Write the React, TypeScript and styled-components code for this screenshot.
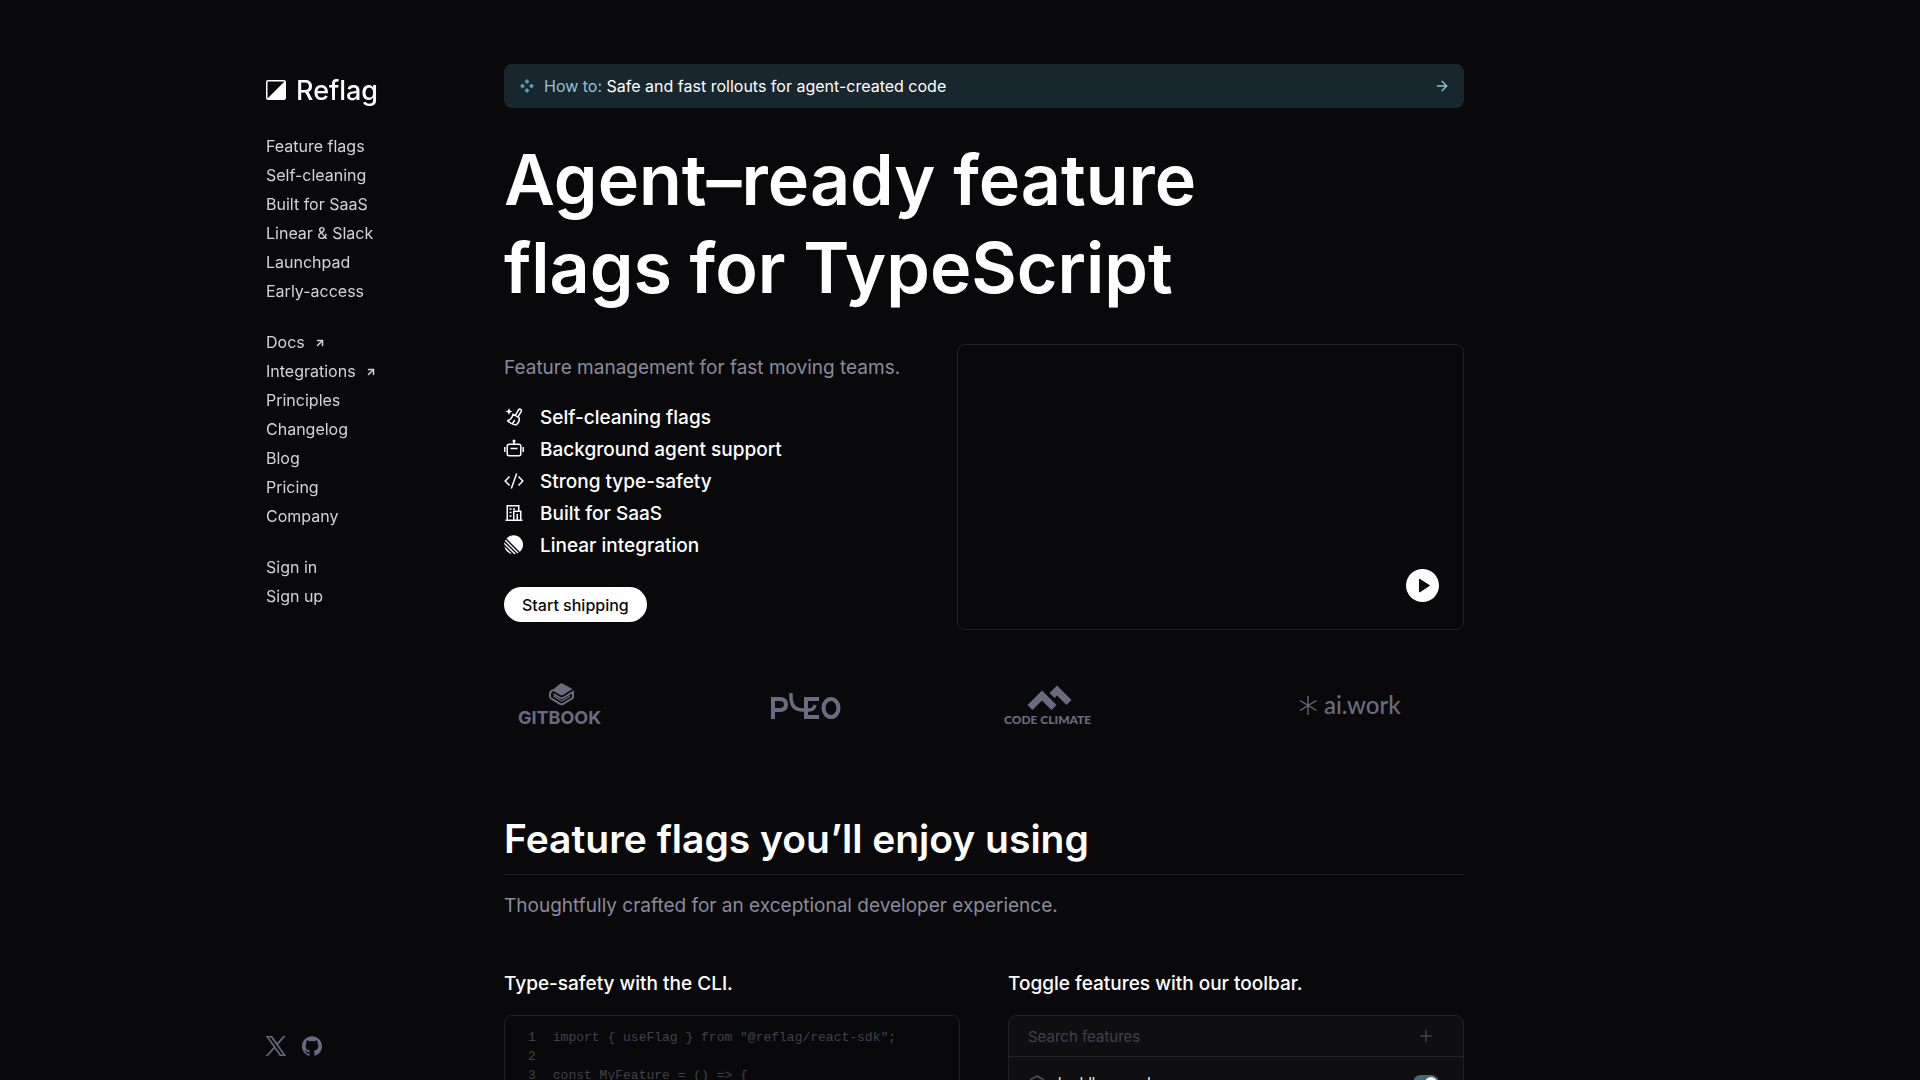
import React from "react";
import styled, { createGlobalStyle } from "styled-components";
import { ArrowRight, ArrowUpRight, Plus } from "lucide-react";

const sans = `Inter, "Liberation Sans", sans-serif`;
const mono = `"Liberation Mono", monospace`;

const GlobalStyle = createGlobalStyle`
  *, *::before, *::after { box-sizing: border-box; }
  body { margin: 0; background: #09090b; color: #fff; font-family: ${sans}; }
  a { color: inherit; text-decoration: none; }
  ul { list-style: none; margin: 0; padding: 0; }
  h1, h2, h3, p { margin: 0; }
  svg { display: block; flex: none; }
`;

const Page = styled.div`
  height: 100vh;
  overflow-y: auto;
  scrollbar-width: none;
`;

const Container = styled.div`
  display: grid;
  grid-template-columns: 238px minmax(0, 960px);
  max-width: 1388px;
  margin: 0 auto;
`;

const Sidebar = styled.aside`
  position: sticky;
  top: 0;
  height: 100vh;
  display: flex;
  flex-direction: column;
  padding: 76px 0 24px;
`;

const Brand = styled.a`
  display: flex;
  align-items: center;
  gap: 10px;
  height: 28px;
  font-size: 27px;
  font-weight: 500;
`;

const Nav = styled.nav`
  display: flex;
  flex-direction: column;
  gap: 22px;
  margin-top: 28px;
`;

const NavGroup = styled.ul`
  font-size: 16px;
  line-height: 29px;
  color: #d4d4d8;
`;

const NavLink = styled.a`
  display: inline-flex;
  align-items: center;
  gap: 9px;
  height: 29px;
  vertical-align: top;
`;

const Socials = styled.div`
  display: flex;
  gap: 16px;
  margin-top: auto;
  color: #6b6b80;
`;

const Main = styled.main`
  padding-top: 64px;
`;

const Banner = styled.a`
  display: flex;
  align-items: center;
  height: 44px;
  padding: 0 14px 0 16px;
  border-radius: 8px;
  background: #18262d;
  color: #8fc3d3;
  font-size: 16px;
`;

const BannerText = styled.span`
  flex: 1;
  margin-left: 10px;
  b { font-weight: 400; color: #fff; }
`;

const Title = styled.h1`
  margin-top: 28px;
  font-size: 70px;
  line-height: 88px;
  font-weight: 600;
`;

const Hero = styled.section`
  display: grid;
  grid-template-columns: 453px minmax(0, 1fr);
  margin-top: 32px;
`;

const Lead = styled.p`
  font-size: 19px;
  line-height: 32px;
  color: #8a8a9e;
`;

const HeroText = styled.div`
  padding-top: 8px;
`;

const Features = styled.ul`
  margin-top: 17px;
  font-size: 19px;
  font-weight: 500;
`;

const Feature = styled.li`
  display: flex;
  align-items: center;
  gap: 16px;
  height: 32px;
`;

const PrimaryButton = styled.button`
  height: 35px;
  margin-top: 26px;
  padding: 0 18px;
  border: 0;
  border-radius: 18px;
  background: #fff;
  color: #09090b;
  font: 500 16px ${sans};
`;

const Video = styled.div`
  display: flex;
  align-items: flex-end;
  justify-content: flex-end;
  height: 286px;
  padding: 27px 24px;
  border: 1px solid #222226;
  border-radius: 8px;
`;

const PlayButton = styled.button`
  width: 33px;
  height: 33px;
  padding: 0;
  border: 0;
  border-radius: 50%;
  background: #fff;
  color: #09090b;
`;

const Logos = styled.section`
  display: grid;
  grid-template-columns: repeat(4, 1fr);
  align-items: center;
  height: 48px;
  margin-top: 52px;
  color: #6b6b80;
`;

const LogoItem = styled.div<{ $start: number }>`
  padding-left: ${(p) => p.$start}px;
`;

const SectionTitle = styled.h2`
  margin-top: 82px;
  padding-bottom: 8px;
  border-bottom: 1px solid #222226;
  font-size: 39px;
  line-height: 54px;
  font-weight: 600;
`;

const SectionLead = styled(Lead)`
  margin-top: 15px;
`;

const Cards = styled.section`
  display: grid;
  grid-template-columns: 1fr 1fr;
  gap: 48px;
  margin-top: 46px;
`;

const CardTitle = styled.h3`
  margin-bottom: 15px;
  font-size: 19px;
  line-height: 32px;
  font-weight: 500;
`;

const Card = styled.div<{ $raised?: boolean }>`
  height: 320px;
  border: 1px solid #222226;
  border-radius: 8px;
  background: ${(p) => (p.$raised ? "#0f0f11" : "transparent")};
`;

const Code = styled.pre`
  margin: 0;
  padding: 12px 23px;
  font: 13px/19px ${mono};
  color: #41414b;
`;

const CodeLine = styled.div`
  display: flex;
  gap: 17px;
  height: 19px;
`;

const SearchBar = styled.div`
  display: flex;
  align-items: center;
  height: 41px;
  padding: 0 28px 0 19px;
  border-bottom: 1px solid #222226;
`;

const SearchInput = styled.input`
  flex: 1;
  padding: 0;
  border: 0;
  outline: 0;
  background: transparent;
  color: #fff;
  font: 15px ${sans};
  &::placeholder { color: #41414b; opacity: 1; }
`;

const IconButton = styled.button`
  padding: 0;
  border: 0;
  background: none;
  color: #41414b;
`;

const FlagRow = styled.label`
  display: flex;
  align-items: center;
  gap: 13px;
  padding: 14px 24px 0 20px;
  font-size: 14px;
  line-height: 24px;
`;

const FlagName = styled.span`
  flex: 1;
`;

const Switch = styled.input`
  appearance: none;
  display: flex;
  width: 26px;
  height: 16px;
  margin: 0;
  padding: 2px;
  border-radius: 8px;
  background: #3f6b7c;
  &:checked { justify-content: flex-end; }
  &::before { content: ""; width: 12px; height: 12px; border-radius: 50%; background: #fff; }
`;

const CODE = [
  `import { useFlag } from "@reflag/react-sdk";`,
  ``,
  `const MyFeature = () => {`,
  `  const { isEnabled } = useFlag("huddle");`,
];

const NAV: { label: string; out?: boolean }[][] = [
  ["Feature flags", "Self-cleaning", "Built for SaaS", "Linear & Slack", "Launchpad", "Early-access"].map((label) => ({ label })),
  [
    { label: "Docs", out: true },
    { label: "Integrations", out: true },
    { label: "Principles" },
    { label: "Changelog" },
    { label: "Blog" },
    { label: "Pricing" },
    { label: "Company" },
  ],
  [{ label: "Sign in" }, { label: "Sign up" }],
];

const BrandMark = () => (
  <svg width="20" height="20" viewBox="0 0 20 20">
    <rect x="0.75" y="0.75" width="18.5" height="18.5" rx="1.5" fill="none" stroke="#fff" strokeWidth="1.5" />
    <path d="M19 1V19H1Z" fill="#fff" />
  </svg>
);

const Sparkle = () => (
  <svg width="14" height="14" viewBox="0 0 14 14" fill="#5b9bb0">
    <path d="M7 0 9.5 2.5 7 5 4.500 2.500ZM7 9 9.500 11.500 7 14 4.500 11.500ZM2.500 4.500 5 7 2.500 9.500 0 7ZM11.500 4.500 14 7 11.500 9.500 9 7Z" />
  </svg>
);

const Broom = () => (
  <svg width="20" height="20" viewBox="0 0 20 20" fill="none" stroke="#fff" strokeWidth="1.5" strokeLinejoin="round" strokeLinecap="round">
    <path d="M11.600 8 14.600 2.700Q15.400 1.600 16.700 2.300 18 3.100 17.300 4.300L14.200 9.600" />
    <path d="M9 7.200 15 10.700C15.800 13.500 14 16.500 12 18 8.500 17.500 5.500 16 3.700 13.500 6.500 13 8.200 11 9 7.200Z" />
    <path d="M8.500 16.500 10.500 13.500" />
    <path d="M5 1 6 3.500 8.500 4.500 6 5.500 5 8 4 5.500 1.500 4.500 4 3.500Z" fill="#fff" stroke="none" />
  </svg>
);

const Robot = () => (
  <svg width="20" height="20" viewBox="0 0 20 20" fill="none" stroke="#fff" strokeWidth="1.500">
    <rect x="3.200" y="5.200" width="13.600" height="11.600" rx="2" />
    <path d="M10 5V1.500M6.500 9.500H13.500M0.750 8V13M19.250 8V13" />
    <circle cx="10" cy="2" r="0.800" fill="#fff" />
  </svg>
);

const CodeIcon = () => (
  <svg width="20" height="20" viewBox="0 0 20 20" fill="none" stroke="#fff" strokeWidth="1.500">
    <path d="M5.500 5.500 1.200 10 5.500 14.500M14.500 5.500 18.800 10 14.500 14.500M12.700 2.500 7.300 17.500" />
  </svg>
);

const Building = () => (
  <svg width="20" height="20" viewBox="0 0 20 20" fill="none" stroke="#fff" strokeWidth="1.500">
    <path d="M1.500 17.250H18.500M3.250 17V2.750H14.750V8M9.750 17V8.250H16.750V17M13.250 11V17" />
    <path d="M5.500 6H7.500M9 6H11M5.500 9.500H7.500M5.500 13H7.500" />
  </svg>
);

const LinearIcon = () => (
  <svg width="20" height="20" viewBox="-1 -1 106 106" fill="#fff">
    <path d="M1.225 61.523c-.222-.949.908-1.546 1.597-.857l36.512 36.512c.69.690.092 1.820-.857 1.597-18.425-4.323-32.930-18.827-37.252-37.252ZM.002 46.889a.990.990 0 0 0 .290.760L52.350 99.710c.201.200.478.307.760.290 2.370-.149 4.695-.460 6.963-.927.765-.157 1.030-1.096.478-1.648L2.576 39.448c-.552-.551-1.491-.286-1.648.479a50.067 50.067 0 0 0-.926 6.962ZM4.210 29.705a.988.988 0 0 0 .208 1.100l64.776 64.776c.289.290.726.375 1.100.208a49.908 49.908 0 0 0 5.185-2.684.981.981 0 0 0 .183-1.540L8.436 24.336a.981.981 0 0 0-1.541.183 49.896 49.896 0 0 0-2.684 5.185Zm8.448-11.631a.986.986 0 0 1-.045-1.354C21.780 6.460 35.111 0 49.952 0 77.592 0 100 22.407 100 50.048c0 14.840-6.460 28.172-16.720 37.338a.986.986 0 0 1-1.354-.045L12.659 18.074Z" />
  </svg>
);

const Play = () => (
  <svg width="33" height="33" viewBox="0 0 33 33" fill="currentColor">
    <path d="M13 10.500Q13 9.500 14 10L23.500 16Q24.300 16.500 23.500 17L14 23.200Q13 23.700 13 22.700Z" />
  </svg>
);

const XLogo = () => (
  <svg width="20" height="20" viewBox="0 0 24 24" fill="currentColor" stroke="currentColor" strokeWidth="0.500">
    <path d="M14.258 10.152 23.176 0h-2.113l-7.747 8.813L7.133 0H0l9.352 13.328L0 23.973h2.113l8.176-9.309 6.531 9.309h7.133zM11.363 13.444l-.949-1.328L2.875 1.560h3.246l6.086 8.523.945 1.328 7.910 11.078h-3.246z" />
  </svg>
);

const GitHubLogo = () => (
  <svg width="20" height="20" viewBox="0 0 24 24" fill="currentColor">
    <path d="M12 .297c-6.630 0-12 5.373-12 12 0 5.303 3.438 9.800 8.205 11.385.6.113.820-.258.820-.577 0-.285-.010-1.040-.015-2.040-3.338.724-4.042-1.610-4.042-1.610C4.422 18.070 3.633 17.700 3.633 17.700c-1.087-.744.084-.729.084-.729 1.205.084 1.838 1.236 1.838 1.236 1.070 1.835 2.809 1.305 3.495.998.108-.776.417-1.305.760-1.605-2.665-.3-5.466-1.332-5.466-5.930 0-1.310.465-2.380 1.235-3.220-.135-.303-.540-1.523.105-3.176 0 0 1.005-.322 3.300 1.230.960-.267 1.980-.399 3-.405 1.020.006 2.040.138 3 .405 2.280-1.552 3.285-1.230 3.285-1.230.645 1.653.240 2.873.120 3.176.765.840 1.230 1.910 1.230 3.220 0 4.610-2.805 5.625-5.475 5.920.420.360.810 1.096.810 2.220 0 1.606-.015 2.896-.015 3.286 0 .315.210.690.825.570C20.565 22.092 24 17.592 24 12.297c0-6.627-5.373-12-12-12" />
  </svg>
);

const GitBookLogo = () => (
  <svg width="96" height="46" viewBox="0 0 96 46" fill="currentColor">
    <path d="M42.500 0.500Q43.500 0 44.500 0.500L54.500 6 45 12Q43.700 12.800 42.400 12L34 7.200Z" />
    <path d="M35 7.200Q32 8.300 32 11V13.500Q32 14.800 33 15.400L42.500 21Q43.700 21.600 44.900 21L54 15.500Q55 15 55 13.800V9L44.900 15Q43.700 15.700 42.500 15L35.500 11" fill="none" stroke="currentColor" strokeWidth="2" />
    <path d="M35.500 13 42.500 17.500Q43.700 18.200 44.900 17.500L52 13.300" fill="none" stroke="currentColor" strokeWidth="1.200" />
    <text x="0" y="41" fontFamily={sans} fontSize="18" fontWeight="700">GITBOOK</text>
  </svg>
);

const PleoLogo = () => (
  <svg width="72" height="28" viewBox="0 0 72 28" fill="none" stroke="currentColor" strokeWidth="4">
    <path d="M3 27V7H10Q16 7 16 12.500T10 18H3" />
    <path d="M21 1V5Q21 18 33 18H39Q44 18 45 13" strokeWidth="3.500" />
    <path d="M49 7H36V25H49" />
    <ellipse cx="61" cy="16" rx="7.500" ry="9" />
  </svg>
);

const CodeClimateLogo = () => (
  <svg width="110" height="46" viewBox="0 -2 110 46" fill="currentColor">
    <path d="M53 0.500 67.500 15 62.500 20 53 10.500 50.500 13 45.500 8ZM38 5.500 52.500 20 47.500 25 38 15.500 28.500 25 23.500 20Z" />
    <text x="0" y="39" fontFamily={`Lato, ${sans}`} fontSize="12" fontWeight="900">CODE CLIMATE</text>
  </svg>
);

const AiWorkLogo = () => (
  <svg width="120" height="36" viewBox="0 -4 120 36" fill="currentColor">
    <path d="M9 4V23M1 8.500 17.500 18.500M17.500 8.500 1 18.500" fill="none" stroke="currentColor" strokeWidth="1.300" />
    <text x="25" y="22" fontFamily={`Lato, ${sans}`} fontSize="24" fontWeight="500">ai.work</text>
  </svg>
);

const Hexagon = () => (
  <svg width="16" height="16" viewBox="0 0 16 16" fill="none" stroke="#52525b" strokeWidth="1.500">
    <path d="M8 1 14.200 4.500V11.500L8 15 1.800 11.500V4.500Z" />
  </svg>
);

const FEATURES = [
  { icon: <Broom />, label: "Self-cleaning flags" },
  { icon: <Robot />, label: "Background agent support" },
  { icon: <CodeIcon />, label: "Strong type-safety" },
  { icon: <Building />, label: "Built for SaaS" },
  { icon: <LinearIcon />, label: "Linear integration" },
];

export default function App() {
  return (
    <Page>
      <GlobalStyle />
      <Container>
        <Sidebar>
          <Brand href="#"><BrandMark />Reflag</Brand>
          <Nav>
            {NAV.map((group, i) => (
              <NavGroup key={i}>
                {group.map((item) => (
                  <li key={item.label}>
                    <NavLink href="#">
                      {item.label}
                      {item.out && <ArrowUpRight size={12} strokeWidth={3} />}
                    </NavLink>
                  </li>
                ))}
              </NavGroup>
            ))}
          </Nav>
          <Socials>
            <a href="#" aria-label="X"><XLogo /></a>
            <a href="#" aria-label="GitHub"><GitHubLogo /></a>
          </Socials>
        </Sidebar>
        <Main>
          <Banner href="#">
            <Sparkle />
            <BannerText>How to: <b>Safe and fast rollouts for agent-created code</b></BannerText>
            <ArrowRight size={16} strokeWidth={2} />
          </Banner>
          <Title>Agent–ready feature<br />flags for TypeScript</Title>
          <Hero>
            <HeroText>
              <Lead>Feature management for fast moving teams.</Lead>
              <Features>
                {FEATURES.map((f) => (
                  <Feature key={f.label}>{f.icon}{f.label}</Feature>
                ))}
              </Features>
              <PrimaryButton>Start shipping</PrimaryButton>
            </HeroText>
            <Video>
              <PlayButton aria-label="Play video"><Play /></PlayButton>
            </Video>
          </Hero>
          <Logos>
            <LogoItem $start={14}><GitBookLogo /></LogoItem>
            <LogoItem $start={26}><PleoLogo /></LogoItem>
            <LogoItem $start={20}><CodeClimateLogo /></LogoItem>
            <LogoItem $start={75}><AiWorkLogo /></LogoItem>
          </Logos>
          <SectionTitle>Feature flags you’ll enjoy using</SectionTitle>
          <SectionLead>Thoughtfully crafted for an exceptional developer experience.</SectionLead>
          <Cards>
            <div>
              <CardTitle>Type-safety with the CLI.</CardTitle>
              <Card>
                <Code>
                  {CODE.map((line, i) => (
                    <CodeLine key={i}><span>{i + 1}</span><span>{line}</span></CodeLine>
                  ))}
                </Code>
              </Card>
            </div>
            <div>
              <CardTitle>Toggle features with our toolbar.</CardTitle>
              <Card $raised>
                <SearchBar>
                  <SearchInput type="search" placeholder="Search features" aria-label="Search features" />
                  <IconButton aria-label="Add feature"><Plus size={18} strokeWidth={2} /></IconButton>
                </SearchBar>
                <FlagRow>
                  <Hexagon />
                  <FlagName>huddle-sound</FlagName>
                  <Switch type="checkbox" defaultChecked />
                </FlagRow>
              </Card>
            </div>
          </Cards>
        </Main>
      </Container>
    </Page>
  );
}
